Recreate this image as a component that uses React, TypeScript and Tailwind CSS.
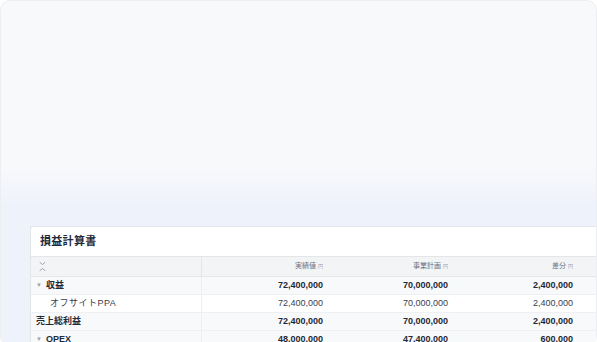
import React from "react";

type Row = {
  label: string;
  indent?: boolean;
  caret?: boolean;
  bold?: boolean;
  bg: string;
  values: string[];
};

const rows: Row[] = [
  { label: "収益", caret: true, bold: true, bg: "bg-[#f8f9fa]", values: ["72,400,000", "70,000,000", "2,400,000"] },
  { label: "オフサイトPPA", indent: true, bg: "bg-white", values: ["72,400,000", "70,000,000", "2,400,000"] },
  { label: "売上総利益", bold: true, bg: "bg-[#f8f9fa]", values: ["72,400,000", "70,000,000", "2,400,000"] },
  { label: "OPEX", caret: true, bold: true, bg: "bg-[#f8f9fa]", values: ["48,000,000", "47,400,000", "600,000"] },
];

const headers = ["実績値", "事業計画", "差分"];

function CollapseIcon() {
  return (
    <svg width="9" height="11" viewBox="0 0 9 11" fill="none" stroke="#9ca3af" strokeWidth="1" strokeLinecap="round" strokeLinejoin="round">
      <path d="M2 1.5 L4.5 3.5 L7 1.5" />
      <path d="M2 9.5 L4.5 7.5 L7 9.5" />
    </svg>
  );
}

export default function App() {
  return (
    <div
      className="w-[597px] h-[342px] overflow-hidden"
      style={{ fontFamily: '"Liberation Sans", "Noto Sans CJK JP", sans-serif' }}
    >
      <div className="w-[597px] h-[346px] rounded-[10px] border border-[#eceef2] bg-gradient-to-b from-[#f8f9fb] from-[48%] to-[#eef2fb] to-[60%] flex flex-col">
        <div className="h-[225px] shrink-0" />
        <div className="ml-[29px] flex-1 bg-white border-t border-l border-[#e3e5e9] rounded-tl-[3px] flex flex-col">
          <div className="h-[30px] flex items-center pl-[9px] border-b border-[#e3e5e9]">
            <span className="text-[11px] font-bold text-[#1f2937] tracking-[0.3px]">損益計算書</span>
          </div>
          <div className="grid grid-cols-[171px_125px_125px_125px_1fr] h-[20px] bg-[#f3f4f6] border-b border-[#e5e7eb]">
            <div className="flex items-center pl-[7px] border-r border-[#e3e5e9]">
              <CollapseIcon />
            </div>
            {headers.map((h) => (
              <div key={h} className="flex items-center justify-end pr-[4px] gap-[2px]">
                <span className="text-[7px] text-[#6b7280]">{h}</span>
                <span className="text-[5px] text-[#9ca3af]">円</span>
              </div>
            ))}
            <div />
          </div>
          {rows.map((r) => (
            <div key={r.label} className={`grid grid-cols-[171px_125px_125px_125px_1fr] h-[18px] border-b border-[#eef0f3] ${r.bg}`}>
              <div className={`flex items-center border-r border-[#eceef1] ${r.indent ? "pl-[19px]" : "pl-[5px]"}`}>
                {r.caret && <span className="text-[6px] text-[#9ca3af] mr-[4px]">▼</span>}
                <span className={`text-[9px] ${r.bold ? "font-semibold text-[#1f2937]" : "text-[#374151] tracking-[0.5px]"}`}>{r.label}</span>
              </div>
              {r.values.map((v, i) => (
                <div key={i} className="flex items-center justify-end pr-[4px]">
                  <span className={`text-[9px] ${r.bold ? "font-bold text-[#1f2937]" : "text-[#374151]"}`}>{v}</span>
                </div>
              ))}
              <div />
            </div>
          ))}
        </div>
      </div>
    </div>
  );
}
